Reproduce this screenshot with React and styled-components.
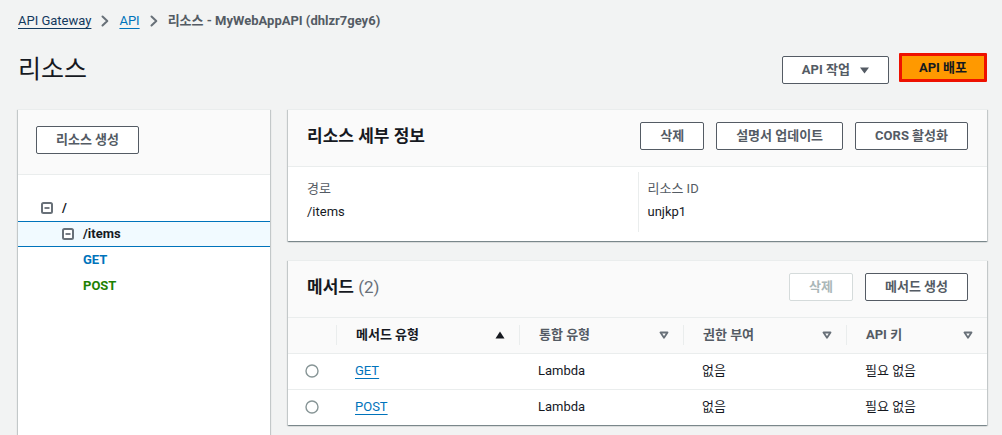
import React from 'react';
import styled, { createGlobalStyle } from 'styled-components';

const GlobalStyle = createGlobalStyle`
  html, body { margin: 0; padding: 0; background: #f2f3f3; overflow: hidden; }
  body {
    font-family: Roboto, "Noto Sans CJK KR", "Noto Sans", sans-serif;
    font-size: 13px;
    line-height: 20px;
    color: #16191f;
  }
  * { box-sizing: border-box; }
`;

const Page = styled.div`
  padding: 11px 15px 0 18px;
`;

const Breadcrumbs = styled.nav`
  display: flex;
  align-items: center;
  gap: 10px;
  height: 20px;
`;

const Crumb = styled.a`
  color: ${(p) => p.$color || '#0073bb'};
  text-decoration: underline;
  text-underline-offset: 3px;
  cursor: pointer;
`;

const CrumbCurrent = styled.span`
  color: #545b64;
  font-weight: 700;
`;

const Header = styled.div`
  display: flex;
  justify-content: space-between;
  align-items: flex-start;
  height: 32px;
  margin-top: 22px;
`;

const Title = styled.h1`
  margin: 2px 0 0;
  font-size: 25px;
  line-height: 30px;
  font-weight: 400;
  color: #16191f;
`;

const Actions = styled.div`
  display: flex;
  align-items: flex-start;
  gap: ${(p) => p.$gap || 12}px;
  margin-top: ${(p) => p.$top || 0}px;
`;

const Button = styled.button`
  display: inline-flex;
  align-items: center;
  gap: 10px;
  height: 28px;
  padding: 0 19px;
  margin-top: ${(p) => p.$top || 0}px;
  border: 1px solid ${(p) => (p.disabled ? '#d5dbdb' : '#545b64')};
  border-radius: 2px;
  background: #fff;
  color: ${(p) => (p.disabled ? '#aab7b8' : '#545b64')};
  font-family: inherit;
  font-size: 13px;
  font-weight: 700;
  line-height: 20px;
  white-space: nowrap;
  cursor: pointer;
`;

const PrimaryButton = styled.button`
  display: inline-flex;
  align-items: center;
  height: 29px;
  padding: 0 17px;
  border: 3px solid #ee1100;
  border-radius: 1px;
  background: #ff9900;
  color: #16191f;
  font-family: inherit;
  font-size: 13px;
  font-weight: 700;
  line-height: 20px;
  white-space: nowrap;
  cursor: pointer;
`;

const Main = styled.div`
  display: grid;
  grid-template-columns: 252px 1fr;
  column-gap: 18px;
  align-items: start;
  margin-top: 24px;
`;

const Card = styled.section`
  background: #fff;
  border-top: 1px solid #eaeded;
  box-shadow: 0 1px 1px 0 rgba(0, 28, 36, 0.3), 1px 1px 1px 0 rgba(0, 28, 36, 0.15),
    -1px 1px 1px 0 rgba(0, 28, 36, 0.15);
`;

const Sidebar = styled(Card)`
  min-height: 340px;
`;

const SidebarHeader = styled.div`
  background: #fafafa;
  padding: 16px 18px 20px;
  border-bottom: 1px solid #eaeded;
`;

const Tree = styled.ul`
  list-style: none;
  margin: 0;
  padding: 20px 0 0;
`;

const TreeRow = styled.li`
  display: flex;
  align-items: center;
  gap: 9px;
  height: 26px;
  padding-left: ${(p) => p.$indent}px;
  font-weight: 700;
  color: ${(p) => p.$color || '#16191f'};
  background: ${(p) => (p.$selected ? '#f1faff' : 'transparent')};
  border-top: 1px solid ${(p) => (p.$selected ? '#0073bb' : 'transparent')};
  border-bottom: 1px solid ${(p) => (p.$selected ? '#0073bb' : 'transparent')};
`;

const Column = styled.div`
  display: flex;
  flex-direction: column;
  gap: 19px;
`;

const CardHeader = styled.div`
  display: flex;
  justify-content: space-between;
  align-items: center;
  background: #fafafa;
  padding: 12px 19px 16px;
  border-bottom: 1px solid #eaeded;
`;

const CardTitle = styled.h2`
  margin: 0;
  font-size: 17px;
  line-height: 22px;
  font-weight: 700;
  color: #16191f;
`;

const Count = styled.span`
  font-weight: 400;
  color: #687078;
`;

const Details = styled.div`
  display: grid;
  grid-template-columns: 1fr 1fr;
  padding: 5px 19px 9px;
`;

const Field = styled.div`
  display: flex;
  flex-direction: column;
  gap: 3px;
  padding: 7px 0 10px ${(p) => (p.$divided ? 9 : 0)}px;
  border-left: ${(p) => (p.$divided ? '1px solid #eaeded' : 'none')};
`;

const Label = styled.div`
  color: #545b64;
`;

const Value = styled.div`
  color: #16191f;
`;

const Table = styled.table`
  width: 100%;
  border-collapse: collapse;
  table-layout: fixed;
`;

const Th = styled.th`
  height: 35px;
  padding: 0;
  background: #fafafa;
  border-bottom: 1px solid #eaeded;
  text-align: left;
  font-weight: 700;
  color: ${(p) => (p.$sorted ? '#16191f' : '#545b64')};
`;

const HeadInner = styled.div`
  display: flex;
  justify-content: space-between;
  align-items: center;
  height: 20px;
  padding: 0 14px 0 19px;
  border-left: 1px solid #eaeded;
`;

const Td = styled.td`
  height: 36px;
  padding: 0 0 0 ${(p) => (p.$center ? 0 : 19)}px;
  text-align: ${(p) => (p.$center ? 'center' : 'left')};
  border-bottom: ${(p) => (p.$last ? 'none' : '1px solid #eaeded')};
  color: #16191f;
  vertical-align: middle;
`;

const Link = styled.a`
  color: #0073bb;
  text-decoration: underline;
  text-underline-offset: 3px;
  cursor: pointer;
`;

const Chevron = () => (
  <svg width="8" height="12" viewBox="0 0 8 12" aria-hidden="true">
    <path d="M1.5 1.5 L6.3 6 L1.5 10.5" fill="none" stroke="#687078" strokeWidth="2" strokeLinecap="round" strokeLinejoin="round" />
  </svg>
);

const CaretDown = () => (
  <svg width="9" height="7" viewBox="0 0 9 7" aria-hidden="true">
    <polygon points="0,0.5 9,0.5 4.5,6.5" fill="#545b64" />
  </svg>
);

const Collapse = () => (
  <svg width="12" height="12" viewBox="0 0 12 12" aria-hidden="true">
    <rect x="1" y="1" width="10" height="10" rx="1.5" fill="#fff" stroke="#687078" strokeWidth="2" />
    <line x1="3.5" y1="6" x2="8.5" y2="6" stroke="#545b64" strokeWidth="1.6" />
  </svg>
);

const SortUp = () => (
  <svg width="10" height="8" viewBox="0 0 10 8" aria-hidden="true">
    <polygon points="5,0.5 9.5,7.5 0.5,7.5" fill="#16191f" />
  </svg>
);

const SortNone = () => (
  <svg width="10" height="8" viewBox="0 0 10 8" aria-hidden="true">
    <polygon points="1.5,1.5 8.5,1.5 5,6.8" fill="none" stroke="#687078" strokeWidth="1.8" strokeLinejoin="round" />
  </svg>
);

const Radio = () => (
  <svg width="14" height="14" viewBox="0 0 14 14" aria-hidden="true" style={{ display: 'block', margin: '0 auto' }}>
    <circle cx="7" cy="7" r="6" fill="#fff" stroke="#879596" strokeWidth="1.4" />
  </svg>
);

const columns = [
  { label: '메서드 유형', sorted: true },
  { label: '통합 유형' },
  { label: '권한 부여' },
  { label: 'API 키' },
];

const methods = [
  { name: 'GET', integration: 'Lambda', auth: '없음', key: '필요 없음' },
  { name: 'POST', integration: 'Lambda', auth: '없음', key: '필요 없음' },
];

export default function App() {
  return (
    <>
      <GlobalStyle />
      <Page>
        <Breadcrumbs>
          <Crumb $color="#12395e">API Gateway</Crumb>
          <Chevron />
          <Crumb>API</Crumb>
          <Chevron />
          <CrumbCurrent>리소스 - MyWebAppAPI (dhlzr7gey6)</CrumbCurrent>
        </Breadcrumbs>

        <Header>
          <Title>리소스</Title>
          <Actions $gap={10}>
            <Button $top={3}>
              API 작업 <CaretDown />
            </Button>
            <PrimaryButton>API 배포</PrimaryButton>
          </Actions>
        </Header>

        <Main>
          <Sidebar>
            <SidebarHeader>
              <Button>리소스 생성</Button>
            </SidebarHeader>
            <Tree>
              <TreeRow $indent={23}>
                <Collapse />/
              </TreeRow>
              <TreeRow $indent={44} $selected>
                <Collapse />/items
              </TreeRow>
              <TreeRow $indent={65} $color="#0073bb">GET</TreeRow>
              <TreeRow $indent={65} $color="#1d8102">POST</TreeRow>
            </Tree>
          </Sidebar>

          <Column>
            <Card>
              <CardHeader>
                <CardTitle>리소스 세부 정보</CardTitle>
                <Actions>
                  <Button>삭제</Button>
                  <Button>설명서 업데이트</Button>
                  <Button>CORS 활성화</Button>
                </Actions>
              </CardHeader>
              <Details>
                <Field>
                  <Label>경로</Label>
                  <Value>/items</Value>
                </Field>
                <Field $divided>
                  <Label>리소스 ID</Label>
                  <Value>unjkp1</Value>
                </Field>
              </Details>
            </Card>

            <Card>
              <CardHeader>
                <CardTitle>
                  메서드 <Count>(2)</Count>
                </CardTitle>
                <Actions>
                  <Button disabled>삭제</Button>
                  <Button>메서드 생성</Button>
                </Actions>
              </CardHeader>
              <Table>
                <colgroup>
                  <col style={{ width: 48 }} />
                  <col style={{ width: 183 }} />
                  <col style={{ width: 164 }} />
                  <col style={{ width: 163 }} />
                  <col />
                </colgroup>
                <thead>
                  <tr>
                    <Th />
                    {columns.map((c) => (
                      <Th key={c.label} $sorted={c.sorted}>
                        <HeadInner>
                          <span>{c.label}</span>
                          {c.sorted ? <SortUp /> : <SortNone />}
                        </HeadInner>
                      </Th>
                    ))}
                  </tr>
                </thead>
                <tbody>
                  {methods.map((m, i) => {
                    const last = i === methods.length - 1;
                    return (
                      <tr key={m.name}>
                        <Td $center $last={last}>
                          <Radio />
                        </Td>
                        <Td $last={last}>
                          <Link>{m.name}</Link>
                        </Td>
                        <Td $last={last}>{m.integration}</Td>
                        <Td $last={last}>{m.auth}</Td>
                        <Td $last={last}>{m.key}</Td>
                      </tr>
                    );
                  })}
                </tbody>
              </Table>
            </Card>
          </Column>
        </Main>
      </Page>
    </>
  );
}
